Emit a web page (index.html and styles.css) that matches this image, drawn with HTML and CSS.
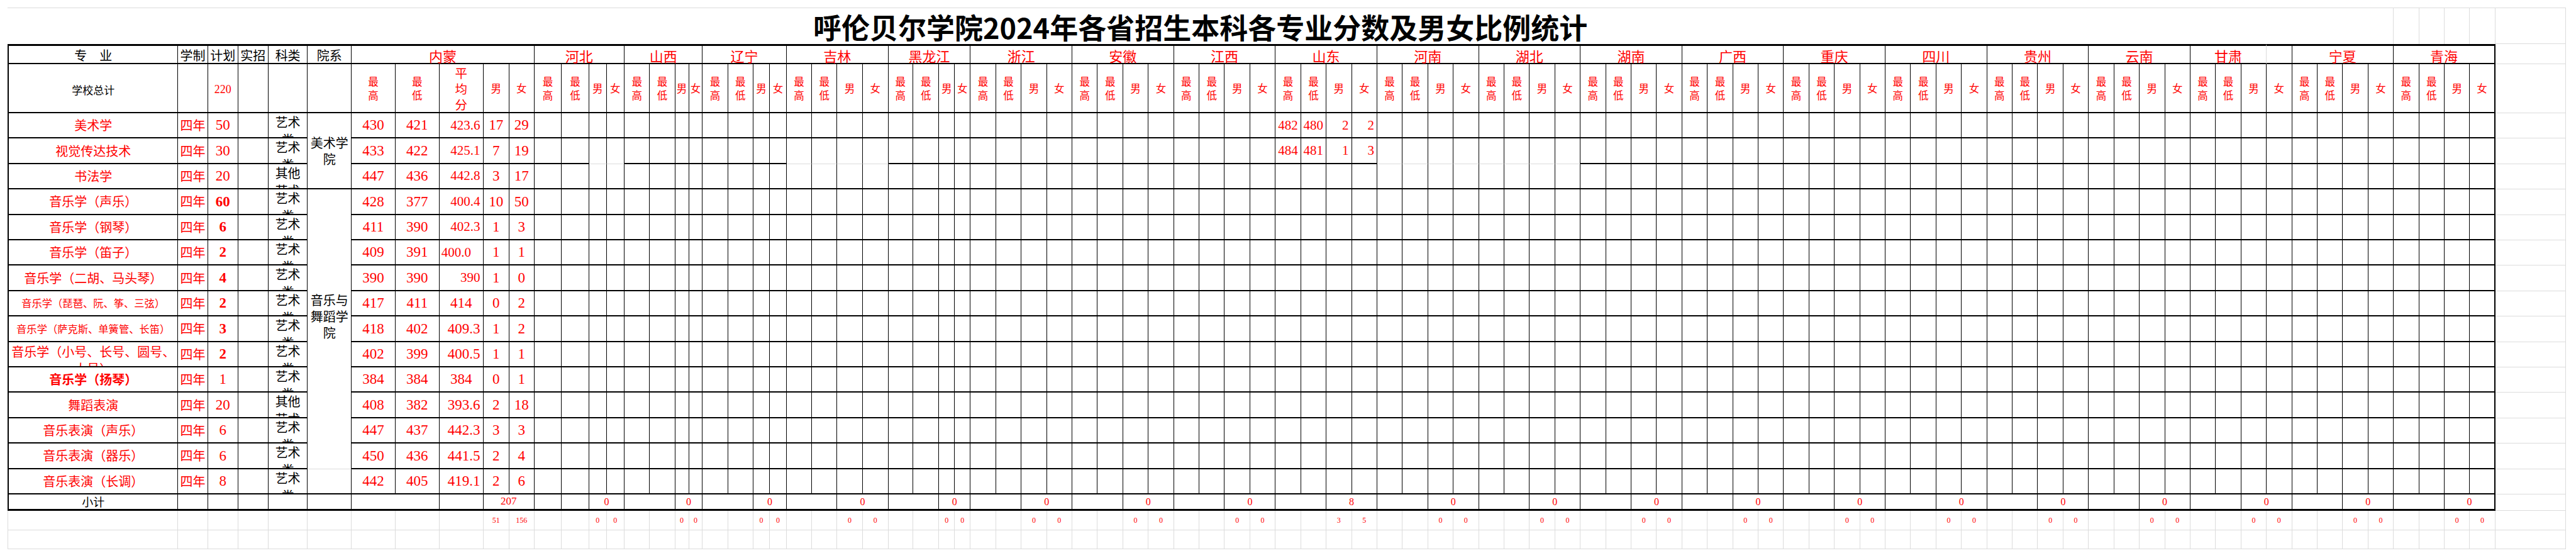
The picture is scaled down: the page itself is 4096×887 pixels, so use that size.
FILE: index.html
```html
<!DOCTYPE html>
<html lang="zh-CN">
<head>
<meta charset="utf-8">
<title>呼伦贝尔学院2024年各省招生本科各专业分数及男女比例统计</title>
<link rel="stylesheet" href="styles.css">
</head>
<body>
<div class="sheet">

<div class="row r-title">
<div class="title">呼伦贝尔学院2024年各省招生本科各专业分数及男女比例统计</div>
<div></div><div></div><div></div><div></div>
<div class="x"></div>
</div>

<div class="row tb r-h1">
<div class="hk">专　业</div>
<div class="hk">学制</div>
<div class="hk">计划</div>
<div class="hk">实招</div>
<div class="hk">科类</div>
<div class="hk">院系</div>
<div class="s5 pv">内蒙</div>
<div class="s4 pv">河北</div>
<div class="s4 pv">山西</div>
<div class="s4 pv">辽宁</div>
<div class="s4 pv">吉林</div>
<div class="s4 pv">黑龙江</div>
<div class="s4 pv">浙江</div>
<div class="s4 pv">安徽</div>
<div class="s4 pv">江西</div>
<div class="s4 pv">山东</div>
<div class="s4 pv">河南</div>
<div class="s4 pv">湖北</div>
<div class="s4 pv">湖南</div>
<div class="s4 pv">广西</div>
<div class="s4 pv">重庆</div>
<div class="s4 pv">四川</div>
<div class="s4 pv">贵州</div>
<div class="s4 pv">云南</div>
<div class="s3 pv gr">甘肃</div>
<div></div>
<div class="s4 pv">宁夏</div>
<div class="s4 pv">青海</div>
<div class="x"></div>
</div>

<div class="row tb r-h2">
<div class="sm">学校总计</div>
<div></div>
<div class="n n18">220</div>
<div></div><div></div><div></div>
<div class="v"><span>最<br>高</span></div><div class="v"><span>最<br>低</span></div><div class="v v3"><span>平<br>均<br>分</span></div><div class="v">男</div><div class="v">女</div>
<div class="v"><span>最<br>高</span></div><div class="v"><span>最<br>低</span></div><div class="v">男</div><div class="v">女</div>
<div class="v"><span>最<br>高</span></div><div class="v"><span>最<br>低</span></div><div class="v">男</div><div class="v">女</div>
<div class="v"><span>最<br>高</span></div><div class="v"><span>最<br>低</span></div><div class="v">男</div><div class="v">女</div>
<div class="v"><span>最<br>高</span></div><div class="v"><span>最<br>低</span></div><div class="v">男</div><div class="v">女</div>
<div class="v"><span>最<br>高</span></div><div class="v"><span>最<br>低</span></div><div class="v">男</div><div class="v">女</div>
<div class="v"><span>最<br>高</span></div><div class="v"><span>最<br>低</span></div><div class="v">男</div><div class="v">女</div>
<div class="v"><span>最<br>高</span></div><div class="v"><span>最<br>低</span></div><div class="v">男</div><div class="v">女</div>
<div class="v"><span>最<br>高</span></div><div class="v"><span>最<br>低</span></div><div class="v">男</div><div class="v">女</div>
<div class="v"><span>最<br>高</span></div><div class="v"><span>最<br>低</span></div><div class="v">男</div><div class="v">女</div>
<div class="v"><span>最<br>高</span></div><div class="v"><span>最<br>低</span></div><div class="v">男</div><div class="v">女</div>
<div class="v"><span>最<br>高</span></div><div class="v"><span>最<br>低</span></div><div class="v">男</div><div class="v">女</div>
<div class="v"><span>最<br>高</span></div><div class="v"><span>最<br>低</span></div><div class="v">男</div><div class="v">女</div>
<div class="v"><span>最<br>高</span></div><div class="v"><span>最<br>低</span></div><div class="v">男</div><div class="v">女</div>
<div class="v"><span>最<br>高</span></div><div class="v"><span>最<br>低</span></div><div class="v">男</div><div class="v">女</div>
<div class="v"><span>最<br>高</span></div><div class="v"><span>最<br>低</span></div><div class="v">男</div><div class="v">女</div>
<div class="v"><span>最<br>高</span></div><div class="v"><span>最<br>低</span></div><div class="v">男</div><div class="v">女</div>
<div class="v"><span>最<br>高</span></div><div class="v"><span>最<br>低</span></div><div class="v">男</div><div class="v">女</div>
<div class="v"><span>最<br>高</span></div><div class="v"><span>最<br>低</span></div><div class="v">男</div><div class="v">女</div>
<div class="v"><span>最<br>高</span></div><div class="v"><span>最<br>低</span></div><div class="v">男</div><div class="v">女</div>
<div class="v"><span>最<br>高</span></div><div class="v"><span>最<br>低</span></div><div class="v">男</div><div class="v">女</div>
<div class="x"></div>
</div>

<div class="row tb">
<div>美术学</div><div>四年</div><div class="n">50</div><div></div><div class="kl"><span>艺术<br>类</span></div>
<div class="dept sr3"><span>美术学<br>院</span></div>
<div class="n">430</div><div class="n">421</div><div class="n ns ra">423.6</div><div class="n">17</div><div class="n">29</div>
<div></div><div></div><div></div><div></div> <div></div><div></div><div></div><div></div> <div></div><div></div><div></div><div></div> <div></div><div></div><div></div><div></div>
<div></div><div></div><div></div><div></div> <div></div><div></div><div></div><div></div> <div></div><div></div><div></div><div></div> <div></div><div></div><div></div><div></div>
<div class="n ns ra">482</div><div class="n ns ra">480</div><div class="n ns ra">2</div><div class="n ns ra">2</div>
<div></div><div></div><div></div><div></div> <div></div><div></div><div></div><div></div> <div></div><div></div><div></div><div></div> <div></div><div></div><div></div><div></div>
<div></div><div></div><div></div><div></div> <div></div><div></div><div></div><div></div> <div></div><div></div><div></div><div></div> <div></div><div></div><div></div><div></div>
<div></div><div></div><div></div><div></div> <div></div><div></div><div></div><div></div> <div></div><div></div><div></div><div></div>
<div class="x"></div>
</div>

<div class="row tb">
<div>视觉传达技术</div><div>四年</div><div class="n">30</div><div></div><div class="kl"><span>艺术<br>类</span></div>
<div class="n">433</div><div class="n">422</div><div class="n ns ra">425.1</div><div class="n">7</div><div class="n">19</div>
<div></div><div></div><div class="gb"></div><div class="gb"></div>
<div></div><div></div><div></div><div></div> <div></div><div></div><div></div><div></div>
<div class="gb"></div><div class="gb"></div><div class="gb"></div><div class="gb"></div>
<div></div><div></div><div></div><div></div> <div></div><div></div><div></div><div></div> <div></div><div></div><div></div><div></div> <div></div><div></div><div></div><div></div>
<div class="n ns ra">484</div><div class="n ns ra">481</div><div class="n ns ra">1</div><div class="n ns ra">3</div>
<div class="gb"></div><div class="gb"></div><div class="gb"></div><div class="gb"></div>
<div class="gb"></div><div class="gb"></div><div class="gb"></div><div class="gb"></div>
<div></div><div></div><div></div><div></div> <div></div><div></div><div></div><div></div> <div></div><div></div><div></div><div></div> <div></div><div></div><div></div><div></div>
<div></div><div></div><div></div><div></div> <div></div><div></div><div></div><div></div> <div></div><div></div><div></div><div></div> <div></div><div></div><div></div><div></div>
<div></div><div></div><div></div><div></div>
<div class="x"></div>
</div>

<div class="row tb">
<div>书法学</div><div>四年</div><div class="n">20</div><div></div><div class="kl"><span>其他<br>艺术</span></div>
<div class="n">447</div><div class="n">436</div><div class="n ns ra">442.8</div><div class="n">3</div><div class="n">17</div>
<div></div><div></div><div></div><div></div> <div></div><div></div><div></div><div></div> <div></div><div></div><div></div><div></div> <div></div><div></div><div></div><div></div>
<div></div><div></div><div></div><div></div> <div></div><div></div><div></div><div></div> <div></div><div></div><div></div><div></div> <div></div><div></div><div></div><div></div>
<div></div><div></div><div></div><div></div> <div></div><div></div><div></div><div></div> <div></div><div></div><div></div><div></div> <div></div><div></div><div></div><div></div>
<div></div><div></div><div></div><div></div> <div></div><div></div><div></div><div></div> <div></div><div></div><div></div><div></div> <div></div><div></div><div></div><div></div>
<div></div><div></div><div></div><div></div> <div></div><div></div><div></div><div></div> <div></div><div></div><div></div><div></div> <div></div><div></div><div></div><div></div>
<div class="x"></div>
</div>

<div class="row tb">
<div>音乐学（声乐）</div><div>四年</div><div class="n b">60</div><div></div><div class="kl"><span>艺术<br>类</span></div>
<div class="dept sr10 nb"><span>音乐与<br>舞蹈学<br>院</span></div>
<div class="n">428</div><div class="n">377</div><div class="n ns ra">400.4</div><div class="n">10</div><div class="n">50</div>
<div></div><div></div><div></div><div></div> <div></div><div></div><div></div><div></div> <div></div><div></div><div></div><div></div> <div></div><div></div><div></div><div></div>
<div></div><div></div><div></div><div></div> <div></div><div></div><div></div><div></div> <div></div><div></div><div></div><div></div> <div></div><div></div><div></div><div></div>
<div></div><div></div><div></div><div></div> <div></div><div></div><div></div><div></div> <div></div><div></div><div></div><div></div> <div></div><div></div><div></div><div></div>
<div></div><div></div><div></div><div></div> <div></div><div></div><div></div><div></div> <div></div><div></div><div></div><div></div> <div></div><div></div><div></div><div></div>
<div></div><div></div><div></div><div></div> <div></div><div></div><div></div><div></div> <div></div><div></div><div></div><div></div> <div></div><div></div><div></div><div></div>
<div class="x"></div>
</div>

<div class="row tb">
<div>音乐学（钢琴）</div><div>四年</div><div class="n b">6</div><div></div><div class="kl"><span>艺术<br>类</span></div>
<div class="n">411</div><div class="n">390</div><div class="n ns ra">402.3</div><div class="n">1</div><div class="n">3</div>
<div></div><div></div><div></div><div></div> <div></div><div></div><div></div><div></div> <div></div><div></div><div></div><div></div> <div></div><div></div><div></div><div></div>
<div></div><div></div><div></div><div></div> <div></div><div></div><div></div><div></div> <div></div><div></div><div></div><div></div> <div></div><div></div><div></div><div></div>
<div></div><div></div><div></div><div></div> <div></div><div></div><div></div><div></div> <div></div><div></div><div></div><div></div> <div></div><div></div><div></div><div></div>
<div></div><div></div><div></div><div></div> <div></div><div></div><div></div><div></div> <div></div><div></div><div></div><div></div> <div></div><div></div><div></div><div></div>
<div></div><div></div><div></div><div></div> <div></div><div></div><div></div><div></div> <div></div><div></div><div></div><div></div> <div></div><div></div><div></div><div></div>
<div class="x"></div>
</div>

<div class="row tb">
<div>音乐学（笛子）</div><div>四年</div><div class="n b">2</div><div></div><div class="kl"><span>艺术<br>类</span></div>
<div class="n">409</div><div class="n">391</div><div class="n ns la">400.0</div><div class="n">1</div><div class="n">1</div>
<div></div><div></div><div></div><div></div> <div></div><div></div><div></div><div></div> <div></div><div></div><div></div><div></div> <div></div><div></div><div></div><div></div>
<div></div><div></div><div></div><div></div> <div></div><div></div><div></div><div></div> <div></div><div></div><div></div><div></div> <div></div><div></div><div></div><div></div>
<div></div><div></div><div></div><div></div> <div></div><div></div><div></div><div></div> <div></div><div></div><div></div><div></div> <div></div><div></div><div></div><div></div>
<div></div><div></div><div></div><div></div> <div></div><div></div><div></div><div></div> <div></div><div></div><div></div><div></div> <div></div><div></div><div></div><div></div>
<div></div><div></div><div></div><div></div> <div></div><div></div><div></div><div></div> <div></div><div></div><div></div><div></div> <div></div><div></div><div></div><div></div>
<div class="x"></div>
</div>

<div class="row tb">
<div>音乐学（二胡、马头琴）</div><div>四年</div><div class="n b">4</div><div></div><div class="kl"><span>艺术<br>类</span></div>
<div class="n">390</div><div class="n">390</div><div class="n ns ra">390</div><div class="n">1</div><div class="n">0</div>
<div></div><div></div><div></div><div></div> <div></div><div></div><div></div><div></div> <div></div><div></div><div></div><div></div> <div></div><div></div><div></div><div></div>
<div></div><div></div><div></div><div></div> <div></div><div></div><div></div><div></div> <div></div><div></div><div></div><div></div> <div></div><div></div><div></div><div></div>
<div></div><div></div><div></div><div></div> <div></div><div></div><div></div><div></div> <div></div><div></div><div></div><div></div> <div></div><div></div><div></div><div></div>
<div></div><div></div><div></div><div></div> <div></div><div></div><div></div><div></div> <div></div><div></div><div></div><div></div> <div></div><div></div><div></div><div></div>
<div></div><div></div><div></div><div></div> <div></div><div></div><div></div><div></div> <div></div><div></div><div></div><div></div> <div></div><div></div><div></div><div></div>
<div class="x"></div>
</div>

<div class="row tb">
<div class="sn">音乐学（琵琶、阮、筝、三弦）</div><div>四年</div><div class="n b">2</div><div></div><div class="kl"><span>艺术<br>类</span></div>
<div class="n">417</div><div class="n">411</div><div class="n">414</div><div class="n">0</div><div class="n">2</div>
<div></div><div></div><div></div><div></div> <div></div><div></div><div></div><div></div> <div></div><div></div><div></div><div></div> <div></div><div></div><div></div><div></div>
<div></div><div></div><div></div><div></div> <div></div><div></div><div></div><div></div> <div></div><div></div><div></div><div></div> <div></div><div></div><div></div><div></div>
<div></div><div></div><div></div><div></div> <div></div><div></div><div></div><div></div> <div></div><div></div><div></div><div></div> <div></div><div></div><div></div><div></div>
<div></div><div></div><div></div><div></div> <div></div><div></div><div></div><div></div> <div></div><div></div><div></div><div></div> <div></div><div></div><div></div><div></div>
<div></div><div></div><div></div><div></div> <div></div><div></div><div></div><div></div> <div></div><div></div><div></div><div></div> <div></div><div></div><div></div><div></div>
<div class="x"></div>
</div>

<div class="row tb">
<div class="sn">音乐学（萨克斯、单簧管、长笛）</div><div>四年</div><div class="n b">3</div><div></div><div class="kl"><span>艺术<br>类</span></div>
<div class="n">418</div><div class="n">402</div><div class="n ra">409.3</div><div class="n">1</div><div class="n">2</div>
<div></div><div></div><div></div><div></div> <div></div><div></div><div></div><div></div> <div></div><div></div><div></div><div></div> <div></div><div></div><div></div><div></div>
<div></div><div></div><div></div><div></div> <div></div><div></div><div></div><div></div> <div></div><div></div><div></div><div></div> <div></div><div></div><div></div><div></div>
<div></div><div></div><div></div><div></div> <div></div><div></div><div></div><div></div> <div></div><div></div><div></div><div></div> <div></div><div></div><div></div><div></div>
<div></div><div></div><div></div><div></div> <div></div><div></div><div></div><div></div> <div></div><div></div><div></div><div></div> <div></div><div></div><div></div><div></div>
<div></div><div></div><div></div><div></div> <div></div><div></div><div></div><div></div> <div></div><div></div><div></div><div></div> <div></div><div></div><div></div><div></div>
<div class="x"></div>
</div>

<div class="row tb">
<div class="wr">音乐学（小号、长号、圆号、大号）</div><div>四年</div><div class="n b">2</div><div></div><div class="kl"><span>艺术<br>类</span></div>
<div class="n">402</div><div class="n">399</div><div class="n ra">400.5</div><div class="n">1</div><div class="n">1</div>
<div></div><div></div><div></div><div></div> <div></div><div></div><div></div><div></div> <div></div><div></div><div></div><div></div> <div></div><div></div><div></div><div></div>
<div></div><div></div><div></div><div></div> <div></div><div></div><div></div><div></div> <div></div><div></div><div></div><div></div> <div></div><div></div><div></div><div></div>
<div></div><div></div><div></div><div></div> <div></div><div></div><div></div><div></div> <div></div><div></div><div></div><div></div> <div></div><div></div><div></div><div></div>
<div></div><div></div><div></div><div></div> <div></div><div></div><div></div><div></div> <div></div><div></div><div></div><div></div> <div></div><div></div><div></div><div></div>
<div></div><div></div><div></div><div></div> <div></div><div></div><div></div><div></div> <div></div><div></div><div></div><div></div> <div></div><div></div><div></div><div></div>
<div class="x"></div>
</div>

<div class="row tb">
<div class="b">音乐学（扬琴）</div><div>四年</div><div class="n">1</div><div></div><div class="kl"><span>艺术<br>类</span></div>
<div class="n">384</div><div class="n">384</div><div class="n">384</div><div class="n">0</div><div class="n">1</div>
<div></div><div></div><div></div><div></div> <div></div><div></div><div></div><div></div> <div></div><div></div><div></div><div></div> <div></div><div></div><div></div><div></div>
<div></div><div></div><div></div><div></div> <div></div><div></div><div></div><div></div> <div></div><div></div><div></div><div></div> <div></div><div></div><div></div><div></div>
<div></div><div></div><div></div><div></div> <div></div><div></div><div></div><div></div> <div></div><div></div><div></div><div></div> <div></div><div></div><div></div><div></div>
<div></div><div></div><div></div><div></div> <div></div><div></div><div></div><div></div> <div></div><div></div><div></div><div></div> <div></div><div></div><div></div><div></div>
<div></div><div></div><div></div><div></div> <div></div><div></div><div></div><div></div> <div></div><div></div><div></div><div></div> <div></div><div></div><div></div><div></div>
<div class="x"></div>
</div>

<div class="row tb">
<div>舞蹈表演</div><div>四年</div><div class="n">20</div><div></div><div class="kl"><span>其他<br>艺术</span></div>
<div class="n">408</div><div class="n">382</div><div class="n ra">393.6</div><div class="n">2</div><div class="n">18</div>
<div></div><div></div><div></div><div></div> <div></div><div></div><div></div><div></div> <div></div><div></div><div></div><div></div> <div></div><div></div><div></div><div></div>
<div></div><div></div><div></div><div></div> <div></div><div></div><div></div><div></div> <div></div><div></div><div></div><div></div> <div></div><div></div><div></div><div></div>
<div></div><div></div><div></div><div></div> <div></div><div></div><div></div><div></div> <div></div><div></div><div></div><div></div> <div></div><div></div><div></div><div></div>
<div></div><div></div><div></div><div></div> <div></div><div></div><div></div><div></div> <div></div><div></div><div></div><div></div> <div></div><div></div><div></div><div></div>
<div></div><div></div><div></div><div></div> <div></div><div></div><div></div><div></div> <div></div><div></div><div></div><div></div> <div></div><div></div><div></div><div></div>
<div class="x"></div>
</div>

<div class="row tb">
<div>音乐表演（声乐）</div><div>四年</div><div class="n">6</div><div></div><div class="kl"><span>艺术<br>类</span></div>
<div class="n">447</div><div class="n">437</div><div class="n ra">442.3</div><div class="n">3</div><div class="n">3</div>
<div></div><div></div><div></div><div></div> <div></div><div></div><div></div><div></div> <div></div><div></div><div></div><div></div> <div></div><div></div><div></div><div></div>
<div></div><div></div><div></div><div></div> <div></div><div></div><div></div><div></div> <div></div><div></div><div></div><div></div> <div></div><div></div><div></div><div></div>
<div></div><div></div><div></div><div></div> <div></div><div></div><div></div><div></div> <div></div><div></div><div></div><div></div> <div></div><div></div><div></div><div></div>
<div></div><div></div><div></div><div></div> <div></div><div></div><div></div><div></div> <div></div><div></div><div></div><div></div> <div></div><div></div><div></div><div></div>
<div></div><div></div><div></div><div></div> <div></div><div></div><div></div><div></div> <div></div><div></div><div></div><div></div> <div></div><div></div><div></div><div></div>
<div class="x"></div>
</div>

<div class="row tb">
<div>音乐表演（器乐）</div><div>四年</div><div class="n">6</div><div></div><div class="kl"><span>艺术<br>类</span></div>
<div class="gb"></div>
<div class="n">450</div><div class="n">436</div><div class="n ra">441.5</div><div class="n">2</div><div class="n">4</div>
<div></div><div></div><div></div><div></div> <div></div><div></div><div></div><div></div> <div></div><div></div><div></div><div></div> <div></div><div></div><div></div><div></div>
<div></div><div></div><div></div><div></div> <div></div><div></div><div></div><div></div> <div></div><div></div><div></div><div></div> <div></div><div></div><div></div><div></div>
<div></div><div></div><div></div><div></div> <div></div><div></div><div></div><div></div> <div></div><div></div><div></div><div></div> <div></div><div></div><div></div><div></div>
<div></div><div></div><div></div><div></div> <div></div><div></div><div></div><div></div> <div></div><div></div><div></div><div></div> <div></div><div></div><div></div><div></div>
<div></div><div></div><div></div><div></div> <div></div><div></div><div></div><div></div> <div></div><div></div><div></div><div></div> <div></div><div></div><div></div><div></div>
<div class="x"></div>
</div>

<div class="row tb">
<div>音乐表演（长调）</div><div>四年</div><div class="n">8</div><div></div><div class="kl"><span>艺术<br>类</span></div>
<div></div>
<div class="n">442</div><div class="n">405</div><div class="n ra">419.1</div><div class="n">2</div><div class="n">6</div>
<div></div><div></div><div></div><div></div> <div></div><div></div><div></div><div></div> <div></div><div></div><div></div><div></div> <div></div><div></div><div></div><div></div>
<div></div><div></div><div></div><div></div> <div></div><div></div><div></div><div></div> <div></div><div></div><div></div><div></div> <div></div><div></div><div></div><div></div>
<div></div><div></div><div></div><div></div> <div></div><div></div><div></div><div></div> <div></div><div></div><div></div><div></div> <div></div><div></div><div></div><div></div>
<div></div><div></div><div></div><div></div> <div></div><div></div><div></div><div></div> <div></div><div></div><div></div><div></div> <div></div><div></div><div></div><div></div>
<div></div><div></div><div></div><div></div> <div></div><div></div><div></div><div></div> <div></div><div></div><div></div><div></div> <div></div><div></div><div></div><div></div>
<div class="x"></div>
</div>

<div class="row tb r-tot">
<div class="tot">小计</div>
<div></div><div></div><div></div><div></div><div></div>
<div class="s2"></div><div></div><div class="s2 n n17">207</div>
<div></div><div></div><div class="s2 n n16">0</div>
<div class="s2"></div><div class="s2 n n16">0</div>
<div class="s2"></div><div class="s2 n n16">0</div>
<div class="s2"></div><div class="s2 n n16">0</div>
<div class="s2"></div><div class="s2 n n16">0</div>
<div class="s2"></div><div class="s2 n n16">0</div>
<div class="s2"></div><div class="s2 n n16">0</div>
<div class="s2"></div><div class="s2 n n16">0</div>
<div class="s2"></div><div class="s2 n n16">8</div>
<div class="s2"></div><div class="s2 n n16">0</div>
<div class="s2"></div><div class="s2 n n16">0</div>
<div class="s2"></div><div class="s2 n n16">0</div>
<div class="s2"></div><div class="s2 n n16">0</div>
<div class="s2"></div><div class="s2 n n16">0</div>
<div class="s2"></div><div class="s2 n n16">0</div>
<div class="s2"></div><div class="s2 n n16">0</div>
<div class="s2"></div><div class="s2 n n16">0</div>
<div class="s2"></div><div class="s2 n n16">0</div>
<div class="s2"></div><div class="s2 n n16">0</div>
<div class="s2"></div><div class="s2 n n16">0</div>
<div class="x"></div>
</div>

<div class="row r-g">
<div></div><div></div><div></div><div></div><div></div><div></div>
<div></div><div></div><div></div><div>51</div><div>156</div>
<div></div><div></div><div>0</div><div>0</div> <div></div><div></div><div>0</div><div>0</div> <div></div><div></div><div>0</div><div>0</div> <div></div><div></div><div>0</div><div>0</div>
<div></div><div></div><div>0</div><div>0</div> <div></div><div></div><div>0</div><div>0</div> <div></div><div></div><div>0</div><div>0</div> <div></div><div></div><div>0</div><div>0</div>
<div></div><div></div><div>3</div><div>5</div> <div></div><div></div><div>0</div><div>0</div> <div></div><div></div><div>0</div><div>0</div> <div></div><div></div><div>0</div><div>0</div>
<div></div><div></div><div>0</div><div>0</div> <div></div><div></div><div>0</div><div>0</div> <div></div><div></div><div>0</div><div>0</div> <div></div><div></div><div>0</div><div>0</div>
<div></div><div></div><div>0</div><div>0</div> <div></div><div></div><div>0</div><div>0</div> <div></div><div></div><div>0</div><div>0</div> <div></div><div></div><div>0</div><div>0</div>
<div class="x"></div>
</div>

<div class="row r-g">
<div></div><div></div><div></div><div></div><div></div><div></div>
<div></div><div></div><div></div><div></div><div></div>
<div></div><div></div><div></div><div></div> <div></div><div></div><div></div><div></div> <div></div><div></div><div></div><div></div> <div></div><div></div><div></div><div></div>
<div></div><div></div><div></div><div></div> <div></div><div></div><div></div><div></div> <div></div><div></div><div></div><div></div> <div></div><div></div><div></div><div></div>
<div></div><div></div><div></div><div></div> <div></div><div></div><div></div><div></div> <div></div><div></div><div></div><div></div> <div></div><div></div><div></div><div></div>
<div></div><div></div><div></div><div></div> <div></div><div></div><div></div><div></div> <div></div><div></div><div></div><div></div> <div></div><div></div><div></div><div></div>
<div></div><div></div><div></div><div></div> <div></div><div></div><div></div><div></div> <div></div><div></div><div></div><div></div> <div></div><div></div><div></div><div></div>
<div class="x"></div>
</div>

</div>
</body>
</html>
```

FILE: styles.css
```css
* { box-sizing: border-box; }

html, body {
  margin: 0;
  padding: 0;
  background: #fff;
}

body {
  width: 4096px;
  height: 887px;
  overflow: hidden;
}

.sheet {
  display: grid;
  grid-template-columns:
    271.4px 47.4px 48px 48px 62.7px 69.7px
    69.8px 69.8px 69.8px 41.4px 39.8px
    43.5px 43.6px 27.8px 28.4px
    40.3px 40.4px 21.8px 21.8px
    40.3px 40.4px 26.1px 26.7px
    40.3px 40.4px 40.3px 40.8px
    39.6px 41.2px 24.9px 25.2px
    repeat(60, 40.41px)
    112px;
  grid-template-rows: 57.8px 32.6px 77.7px repeat(15, 40.4px) 26.4px 31.1px 29.5px;
  margin: 12px 0 0 12px;
  width: 4068.2px;
  font-family: "Noto Sans CJK SC", "Noto Sans", sans-serif;
  font-size: 20px;
  color: #f00;
}

.row { display: contents; }

:where(.row) > div {
  display: flex;
  align-items: center;
  justify-content: center;
  text-align: center;
  min-width: 0;
  min-height: 0;
  line-height: 1.2;
  border-right: 1px solid #000;
  border-bottom: 2px solid #000;
}

.tb > div:first-child { border-left: 2px solid #000; }
.tb > div:nth-last-child(2) { border-right: 2px solid #000; }
.r-h1 > div { border-top: 3px solid #000; }
.r-tot > div { border-bottom: 3px solid #000; }

.r-title > div {
  border-top: 1px solid #dcdcdc;
  border-right: 1px solid #dcdcdc;
  border-bottom: 0;
}

.r-g > div {
  border-right: 1px solid #dcdcdc;
  border-bottom: 1px solid #dcdcdc;
  font-family: "Liberation Serif", serif;
  font-size: 12px;
}
.r-g > div:first-child { border-left: 1px solid #dcdcdc; }

.row > .x {
  border: 0;
  border-right: 1px solid #dcdcdc;
  border-bottom: 1px solid #dcdcdc;
}
.r-title > .x { border-top: 1px solid #dcdcdc; }

.gb { border-bottom: 1px solid #dcdcdc; }
.gr { border-right-color: #dcdcdc; }
.nb { border-bottom: 0; }

/* spans */
.s2 { grid-column: span 2; }
.s3 { grid-column: span 3; }
.s4 { grid-column: span 4; }
.s5 { grid-column: span 5; }
.sr3 { grid-row: span 3; }
.sr10 { grid-row: span 10; }

/* title */
.title {
  grid-column: span 87;
  align-items: flex-start;
  padding-top: 7px;
  font-size: 45px;
  line-height: 45px;
  font-weight: 700;
  color: #000;
}

/* headers */
.hk { color: #000; font-size: 20px; line-height: 1; padding-top: 3px; }
.pv { font-size: 22px; line-height: 1; padding-top: 3px; }
.sm { color: #000; font-size: 17px; padding-top: 5px; }
.v { font-size: 16.5px; line-height: 22.5px; }
.v3 { font-size: 19.5px; line-height: 25px; }

/* body */
.n { font-family: "Liberation Serif", serif; font-size: 23px; }
.ns { font-size: 21px; }
.n18 { font-size: 18px; padding-top: 5px; }
.n17 { font-size: 17px; }
.n16 { font-size: 16px; }
.b { font-weight: 700; }
.ra { justify-content: flex-end; padding-right: 4px; }
.la { justify-content: flex-start; padding-left: 3px; }
.sn { font-size: 16.3px; }
.wr { align-items: flex-start; line-height: 27px; padding-top: 1px; overflow: hidden; }
.kl { color: #000; align-items: flex-start; line-height: 28px; overflow: hidden; }
.dept { color: #000; line-height: 26px; }
.tot { color: #000; font-size: 18px; }
```
